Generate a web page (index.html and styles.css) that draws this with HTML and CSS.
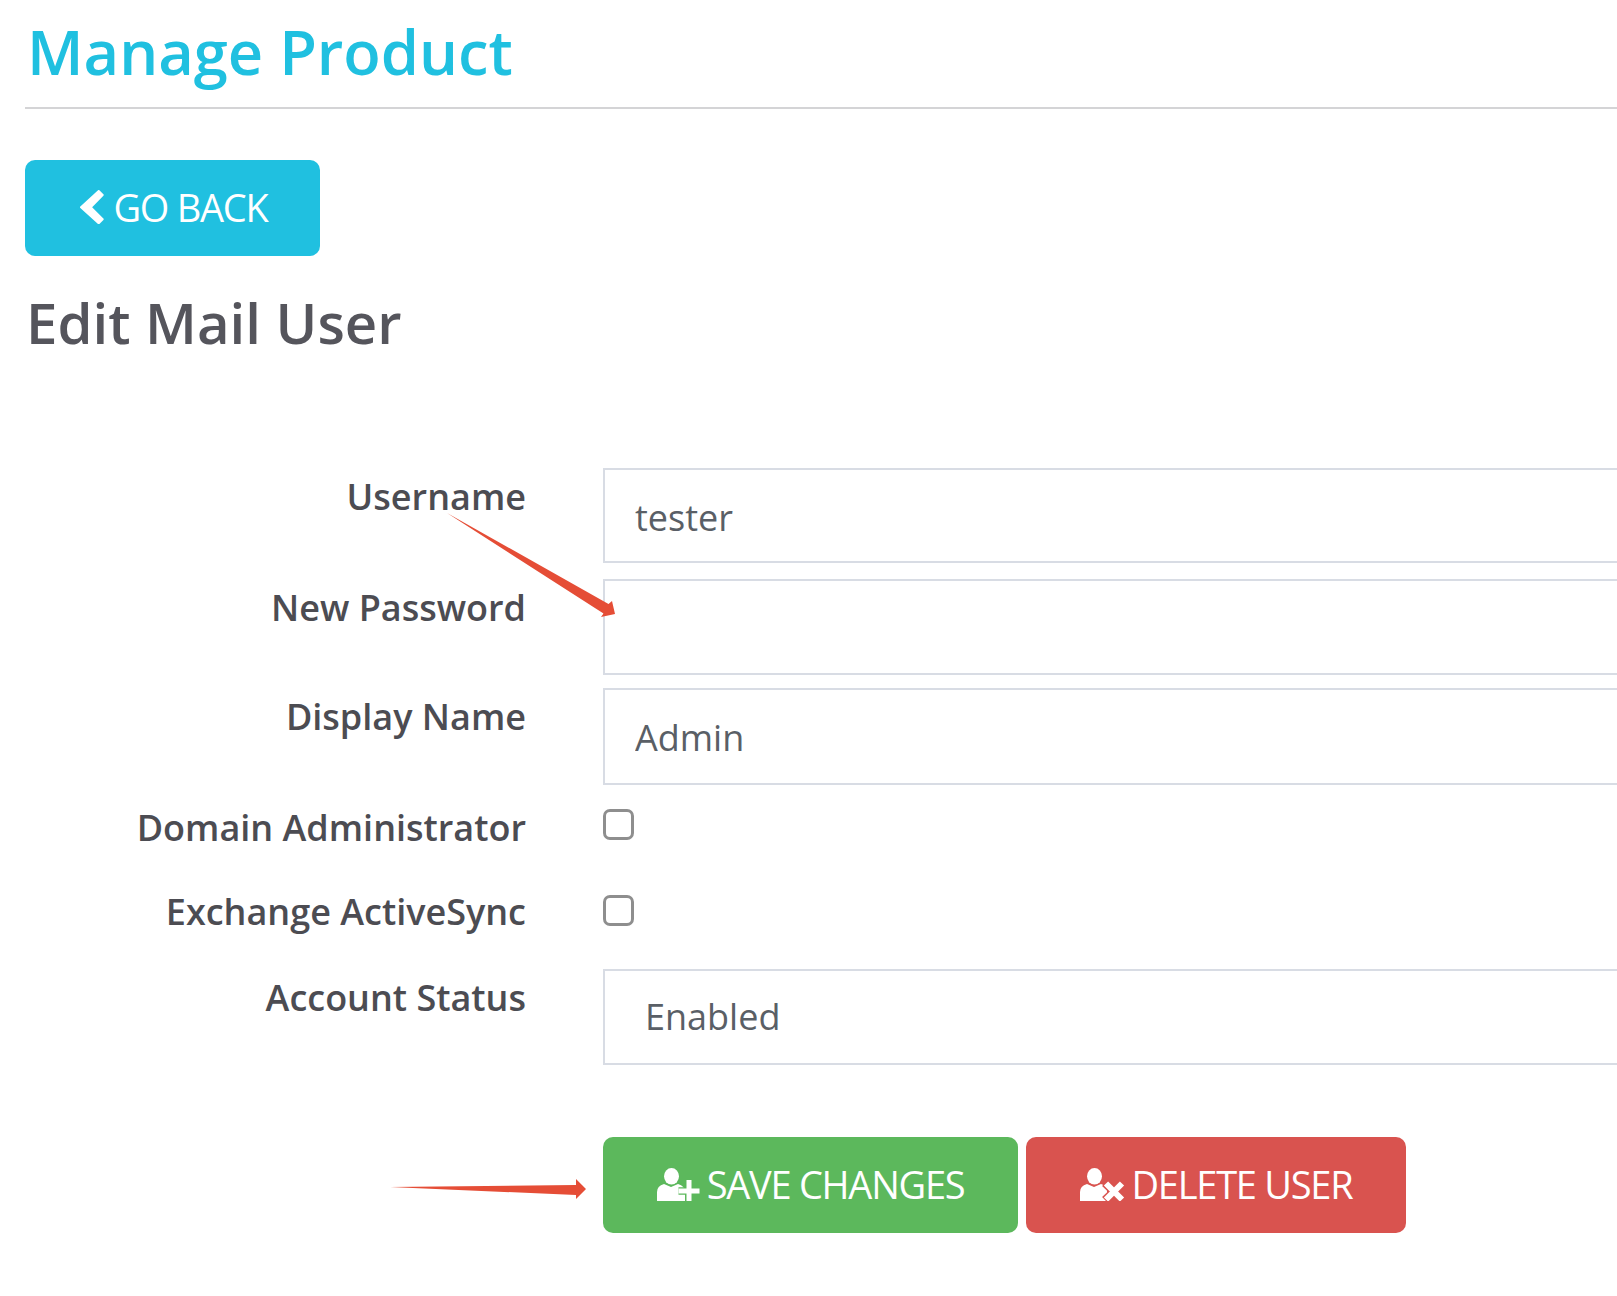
FILE: index.html
```html
<!DOCTYPE html>
<html lang="en">
<head>
    <meta charset="UTF-8">
    <title>Manage Product</title>
    <link rel="stylesheet" href="styles.css">
</head>
<body>
    <div class="page">
        <h1 class="title">Manage Product</h1>

        <a class="btn btn-back" href="#">
            <svg class="icon-back" viewBox="0 0 24 34"><path d="M18.7 1 L22.7 5 L10.7 17.2 L22.7 29.3 L18.7 33.3 L1 17.2 Z" fill="#fff" stroke="#fff" stroke-width="2" stroke-linejoin="round"/></svg>
            GO BACK
        </a>

        <h2 class="subtitle">Edit Mail User</h2>

        <form class="form">
            <div class="row row-first">
                <label class="label">Username</label>
                <input class="field" type="text" value="tester">
            </div>
            <div class="row row-pass">
                <label class="label">New Password</label>
                <input class="field field-pass" type="text">
            </div>
            <div class="row row-name">
                <label class="label">Display Name</label>
                <input class="field field-tall" type="text" value="Admin">
            </div>
            <div class="row row-check">
                <label class="label label-check">Domain Administrator</label>
                <span class="check"></span>
            </div>
            <div class="row row-check2">
                <label class="label label-check">Exchange ActiveSync</label>
                <span class="check"></span>
            </div>
            <div class="row row-status">
                <label class="label">Account Status</label>
                <div class="field field-select">Enabled</div>
            </div>
            <div class="row row-actions">
                <span></span>
                <div class="actions">
                    <a class="btn btn-save" href="#">
                        <svg class="icon-save" viewBox="0 0 43 33"><ellipse cx="14.5" cy="8.3" rx="7.5" ry="8.3" fill="#fff"/><path d="M0 33 V24 Q0 18 7 16 L14 19 L21 16 Q28 18 28 24 V33 Z" fill="#fff"/><path d="M32 12 V33 M21.5 23 H42.5" stroke="#5cb85c" stroke-width="7.5"/><path d="M32 12 V33 M21.5 23 H42.5" stroke="#fff" stroke-width="5"/></svg>
                        SAVE CHANGES
                    </a>
                    <a class="btn btn-delete" href="#">
                        <svg class="icon-delete" viewBox="0 0 45 33"><ellipse cx="14.5" cy="8.3" rx="7.5" ry="8.3" fill="#fff"/><path d="M0 33 V24 Q0 18 7 16 L14 19 L21 16 Q28 18 27 24 V33 Z" fill="#fff"/><path d="M25 15 L43 32 M43 15 L25 32" stroke="#d9534f" stroke-width="8.5"/><path d="M26 15.5 L42 31.5 M42 15.5 L26 31.5" stroke="#fff" stroke-width="6"/></svg>
                        DELETE USER
                    </a>
                </div>
            </div>
        </form>
    </div>

    <!-- red annotation arrows -->
    <svg class="arrow arrow-one" viewBox="0 0 170 105"><path d="M0 0 L161.5 91 L165 88 L168 101 L154 104 L156.5 100.5 Z" fill="#e54d36"/></svg>
    <svg class="arrow arrow-two" viewBox="0 0 200 26"><path d="M0 11 L186 9 L186 3 L196 13 L186 23 L186 19 Z" fill="#e54d36"/></svg>
</body>
</html>
```

FILE: styles.css
```css
html, body {
    margin: 0;
    padding: 0;
    background: #fff;
    overflow: hidden;
}
body {
    height: 1296px;
    width: 1617px;
    position: relative;
    font-family: "Open Sans", sans-serif;
    color: #55555c;
}
.page {
    padding: 0 0 0 25px;
}
.title {
    margin: 0;
    padding: 10px 0 0 2px;
    box-sizing: border-box;
    height: 109px;
    border-bottom: 2px solid #d4d4d6;
    font-size: 61.4px;
    line-height: 82px;
    font-weight: 600;
    color: #20c0e0;
}
.btn {
    display: inline-flex;
    align-items: center;
    justify-content: center;
    box-sizing: border-box;
    height: 96px;
    padding-bottom: 2px;
    border-radius: 10px;
    color: #fff;
    text-decoration: none;
    font-size: 38px;
    letter-spacing: -1.25px;
}
.btn-back {
    margin-top: 51px;
    width: 295px;
    padding-left: 3px;
    background: #20c0e0;
    gap: 9px;
}
.icon-back {
    width: 24px;
    height: 34px;
}
.subtitle {
    margin: 0;
    padding: 29px 0 0 1px;
    font-size: 56.3px;
    line-height: 74px;
    font-weight: 600;
    color: #55555c;
}
.row {
    display: grid;
    grid-template-columns: 501px 1fr;
    column-gap: 77px;
    align-items: start;
}
.row-first { margin-top: 109px; }
.row-pass { margin-top: 16px; }
.row-name { margin-top: 13px; }
.row-check { margin-top: 24px; }
.row-check2 { margin-top: 48px; }
.row-status { margin-top: 40px; }
.row-actions { margin-top: 72px; }
.label {
    text-align: right;
    font-size: 36px;
    line-height: 58px;
    font-weight: 600;
    color: #4c4c52;
}
.label-check {
    line-height: 38px;
}
.row-check2 .label-check {
    line-height: 34px;
}
.field {
    display: block;
    box-sizing: border-box;
    width: 1100px;
    height: 95px;
    padding: 4px 30px 0;
    border: 2px solid #d8dce4;
    background: #fff;
    font-family: "Open Sans", sans-serif;
    font-size: 36px;
    color: #5a5f66;
    outline: none;
}
.field-pass {
    height: 96px;
}
.field-tall {
    height: 97px;
    padding-top: 2px;
}
.field-select {
    height: 96px;
    padding: 0 40px;
    line-height: 92px;
}
.check {
    display: block;
    width: 31px;
    height: 31px;
    box-sizing: border-box;
    border: 3px solid #8e8e8e;
    border-radius: 7px;
}
.actions {
    display: flex;
    gap: 8px;
}
.btn-save {
    width: 415px;
    background: #5cb85c;
    gap: 7px;
}
.btn-delete {
    width: 380px;
    background: #d9534f;
    gap: 7px;
}
.icon-save {
    width: 43px;
    height: 33px;
}
.icon-delete {
    width: 45px;
    height: 33px;
}
.arrow {
    position: absolute;
}
.arrow-one {
    left: 447px;
    top: 513px;
    width: 170px;
    height: 105px;
}
.arrow-two {
    left: 390px;
    top: 1176px;
    width: 200px;
    height: 26px;
}
```
